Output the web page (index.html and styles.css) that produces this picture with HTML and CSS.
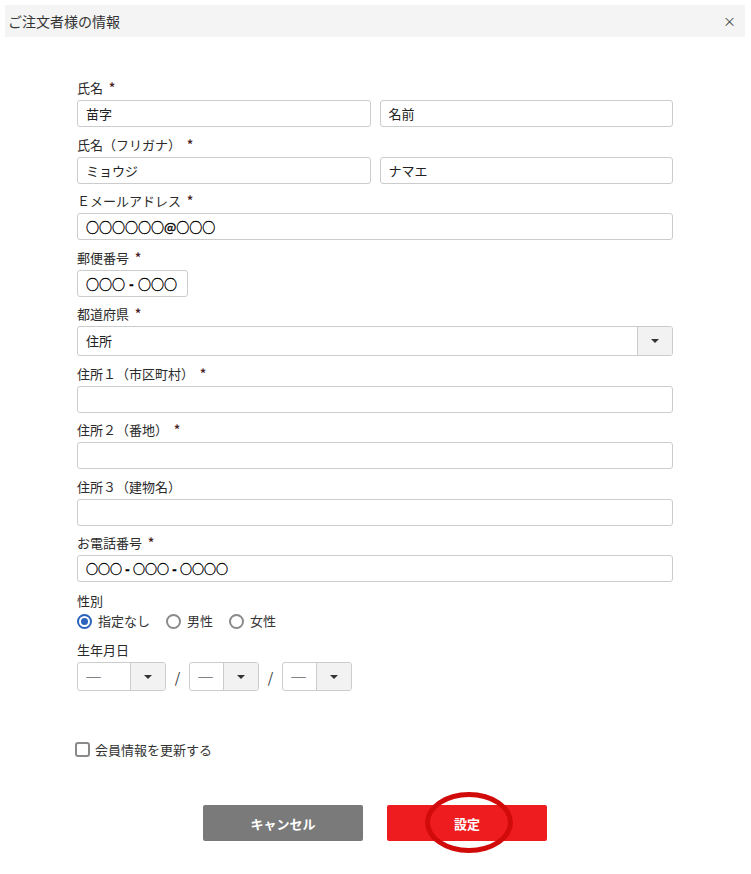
FILE: index.html
```html
<!DOCTYPE html>
<html lang="ja">
<head>
<meta charset="utf-8">
<link rel="stylesheet" href="styles.css">
</head>
<body>
<div class="modal">
  <div class="modal-head">
    <span class="modal-title">ご注文者様の情報</span>
    <span class="modal-close">×</span>
  </div>
  <form class="form">
    <div class="group">
      <div class="label">氏名<span class="req">*</span></div>
      <div class="row2">
        <div class="input">苗字</div>
        <div class="input">名前</div>
      </div>
    </div>
    <div class="group">
      <div class="label">氏名（フリガナ）<span class="req">*</span></div>
      <div class="row2">
        <div class="input">ミョウジ</div>
        <div class="input">ナマエ</div>
      </div>
    </div>
    <div class="group">
      <div class="label">Ｅメールアドレス<span class="req">*</span></div>
      <div class="input circ">○○○○○○@○○○</div>
    </div>
    <div class="group">
      <div class="label">郵便番号<span class="req">*</span></div>
      <div class="input zip circ">○○○<span class="hy">-</span>○○○</div>
    </div>
    <div class="group">
      <div class="label">都道府県<span class="req">*</span></div>
      <div class="select wide">
        <span class="select-val">住所</span>
        <span class="select-btn"><span class="caret"></span></span>
      </div>
    </div>
    <div class="group">
      <div class="label">住所１（市区町村）<span class="req">*</span></div>
      <div class="input"></div>
    </div>
    <div class="group">
      <div class="label">住所２（番地）<span class="req">*</span></div>
      <div class="input"></div>
    </div>
    <div class="group">
      <div class="label">住所３（建物名）</div>
      <div class="input"></div>
    </div>
    <div class="group">
      <div class="label">お電話番号<span class="req">*</span></div>
      <div class="input circ tel">○○○<span class="hy">-</span>○○○<span class="hy">-</span>○○○○</div>
    </div>
    <div class="group gender">
      <div class="label">性別</div>
      <div class="radios">
        <span class="radio on"></span><span class="rtext">指定なし</span>
        <span class="radio"></span><span class="rtext">男性</span>
        <span class="radio"></span><span class="rtext">女性</span>
      </div>
    </div>
    <div class="group">
      <div class="label">生年月日</div>
      <div class="birth">
        <div class="select s1"><span class="select-val">―</span><span class="select-btn"><span class="caret"></span></span></div>
        <span class="slash">/</span>
        <div class="select s2"><span class="select-val">―</span><span class="select-btn"><span class="caret"></span></span></div>
        <span class="slash">/</span>
        <div class="select s2"><span class="select-val">―</span><span class="select-btn"><span class="caret"></span></span></div>
      </div>
    </div>
    <div class="check">
      <span class="box"></span><span class="ctext">会員情報を更新する</span>
    </div>
    <div class="actions">
      <button type="button" class="btn cancel">キャンセル</button>
      <div class="btn-wrap">
        <button type="button" class="btn submit">設定</button>
        <span class="mark"></span>
      </div>
    </div>
  </form>
</div>
</body>
</html>
```

FILE: styles.css
```css
* { box-sizing: border-box; }
html, body { margin: 0; padding: 0; background: #fff; }
body {
  font-family: "Noto Sans CJK JP", "Noto Sans", sans-serif;
  color: #333;
  font-size: 13px;
  width: 751px;
  height: 874px;
  overflow: hidden;
}
.modal { padding: 5px 6px 0 5px; }
.modal-head {
  height: 32px;
  background: #f4f4f4;
  display: flex;
  align-items: center;
  justify-content: space-between;
  padding: 0 9px 0 3px;
}
.modal-title { font-size: 14px; color: #333; line-height: 20px; }
.modal-close { font-size: 13px; color: #444; line-height: 20px; }

.form { padding: 41px 0 0 72px; width: 668px; }
.group { margin-bottom: 7.5px; }
.label { line-height: 20px; height: 20px; margin-bottom: 2px; font-size: 13px; color: #2a2a2a; }
.req { color: #4a2222; font-size: 12px; font-weight: bold; margin-left: 6px; position: relative; top: -1px; }
.row2 { display: flex; gap: 9px; }
.row2 .input { flex: 1; }
.input {
  height: 27px;
  border: 1px solid #ccc;
  border-radius: 3px;
  padding: 0 8px;
  font-size: 13px;
  line-height: 25px;
  color: #222;
  background: #fff;
}
.input.circ { color: #000; -webkit-text-stroke: 0.35px #000; }
.hy { display: inline-block; width: 13px; text-align: center; font-weight: bold; font-family: "Liberation Sans", sans-serif; }
.input.tel { font-size: 12px; }
.input.tel .hy { width: 11px; font-size: 13px; }
.input.zip { width: 111px; }
.select {
  height: 30px;
  border: 1px solid #ccc;
  border-radius: 3px;
  display: flex;
  background: #fff;
}
.select-val { flex: 1; padding: 0 8px; line-height: 28px; font-size: 13px; color: #222; }
.select-btn {
  width: 35px;
  border-left: 1px solid #ccc;
  background: #f2f2f2;
  display: flex;
  align-items: center;
  justify-content: center;
  border-radius: 0 2px 2px 0;
}
.caret {
  width: 0; height: 0;
  border-left: 4px solid transparent;
  border-right: 4px solid transparent;
  border-top: 4px solid #333;
}
.gender { margin-top: 9px; margin-bottom: 9px; }
.gender .label { margin-bottom: 0; }
.radios { display: flex; align-items: center; height: 20px; }
.radio {
  width: 15px; height: 15px;
  border: 2px solid #8a8a8a;
  border-radius: 50%;
  margin-right: 6px;
  position: relative;
}
.radio.on { border-color: #2b64bd; }
.radio.on::after {
  content: "";
  position: absolute;
  left: 2px; top: 2px;
  width: 7px; height: 7px;
  border-radius: 50%;
  background: #2b64bd;
}
.rtext { margin-right: 16px; font-size: 13px; line-height: 20px; }
.birth { display: flex; align-items: center; }
.birth .select { height: 29px; }
.s1 { width: 89px; }
.s2 { width: 70px; }
.birth .select-val { color: #666; padding-left: 7px; font-size: 17px; }
.slash { width: 23px; text-align: center; font-size: 14px; color: #333; }
.check { display: flex; align-items: center; margin-top: 48px; height: 20px; margin-left: -2px; }
.box {
  width: 15px; height: 15px;
  border: 2px solid #8a8a8a;
  border-radius: 3px;
  margin-right: 5px;
}
.ctext { font-size: 13px; }
.actions { display: flex; gap: 24px; margin-top: 46px; padding-left: 126px; }
.btn {
  width: 160px;
  height: 36px;
  border: none;
  border-radius: 2px;
  color: #fff;
  font-family: "Noto Sans CJK JP", sans-serif;
  font-weight: bold;
  font-size: 13px;
  cursor: pointer;
}
.cancel { background: #7a7a7a; }
.submit { background: #ef1c1f; }
.btn-wrap { position: relative; }
.mark {
  position: absolute;
  left: 38px;
  top: -13px;
  width: 88px;
  height: 61px;
  border: 5px solid #d10a0a;
  border-radius: 50%;
  pointer-events: none;
}
```
